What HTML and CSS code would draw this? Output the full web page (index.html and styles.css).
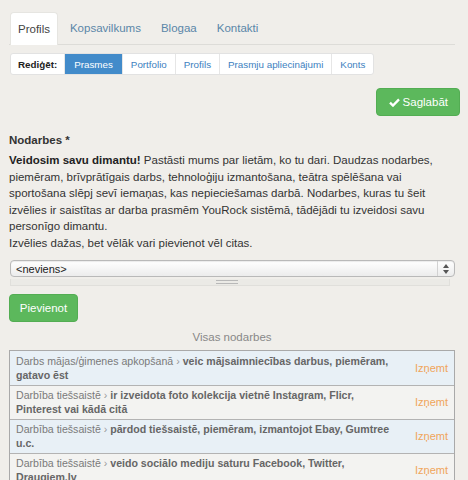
FILE: index.html
```html
<!DOCTYPE html>
<html lang="lv">
<head>
    <meta charset="UTF-8">
    <meta name="viewport" content="width=device-width, initial-scale=1.0">
    <title>Profils</title>
    <link rel="stylesheet" href="styles.css">
</head>
<body>

    <div class="page">
        <ul class="tabs">
            <li class="active"><a href="#">Profils</a></li>
            <li><a href="#">Kopsavilkums</a></li>
            <li><a href="#">Blogaa</a></li>
            <li><a href="#">Kontakti</a></li>
        </ul>

        <div class="subnav">
            <span class="subnav-label">Rediģēt:</span>
            <a href="#" class="current">Prasmes</a>
            <a href="#">Portfolio</a>
            <a href="#">Profils</a>
            <a href="#">Prasmju apliecinājumi</a>
            <a href="#">Konts</a>
        </div>

        <div class="actions">
            <button class="btn">
                <svg class="check" viewBox="0 0 12 10" width="11" height="9">
                    <path d="M1 5.2 L4.3 8.4 L11 1.6" fill="none" stroke="#fff" stroke-width="2.6"/>
                </svg>
                Saglabāt
            </button>
        </div>

        <h3 class="field-title">Nodarbes *</h3>
        <p class="intro">
            <b>Veidosim savu dimantu!</b> Pastāsti mums par lietām, ko tu dari. Daudzas nodarbes,
            piemēram, brīvprātīgais darbs, tehnoloģiju izmantošana, teātra spēlēšana vai
            sportošana slēpj sevī iemaņas, kas nepieciešamas darbā. Nodarbes, kuras tu šeit
            izvēlies ir saistītas ar darba prasmēm YouRock sistēmā, tādējādi tu izveidosi savu
            personīgo dimantu.<br>
            Izvēlies dažas, bet vēlāk vari pievienot vēl citas.
        </p>

        <div class="select">
            <span>&lt;neviens&gt;</span>
            <span class="select-arrows">
                <svg viewBox="0 0 6 10" width="6" height="10">
                    <path d="M0 4 L3 0 L6 4 Z M0 6 L3 10 L6 6 Z" fill="#555"/>
                </svg>
            </span>
        </div>
        <div class="resizer"><span class="grip"></span></div>

        <button class="btn add">Pievienot</button>

        <div class="list-title">Visas nodarbes</div>
        <div class="list">
            <div class="row">
                <div class="row-text"><span class="cat">Darbs mājas/ģimenes apkopšanā</span> <span class="sep">›</span> <b>veic mājsaimniecības darbus, piemēram, gatavo ēst</b></div>
                <a href="#" class="remove">Izņemt</a>
            </div>
            <div class="row">
                <div class="row-text"><span class="cat">Darbība tiešsaistē</span> <span class="sep">›</span> <b>ir izveidota foto kolekcija vietnē Instagram, Flicr, Pinterest vai kādā citā</b></div>
                <a href="#" class="remove">Izņemt</a>
            </div>
            <div class="row">
                <div class="row-text"><span class="cat">Darbība tiešsaistē</span> <span class="sep">›</span> <b>pārdod tiešsaistē, piemēram, izmantojot Ebay, Gumtree u.c.</b></div>
                <a href="#" class="remove">Izņemt</a>
            </div>
            <div class="row">
                <div class="row-text"><span class="cat">Darbība tiešsaistē</span> <span class="sep">›</span> <b>veido sociālo mediju saturu Facebook, Twitter, Draugiem.lv</b></div>
                <a href="#" class="remove">Izņemt</a>
            </div>
        </div>
    </div>

</body>
</html>
```

FILE: styles.css
```css
body {
    margin: 0;
    background-color: #f0eeea;
    font-family: "Liberation Sans", Arial, sans-serif;
    font-size: 11.5px;
    color: #333;
}

.page {
    padding: 12px 13px 0 9px;
}

.tabs {
    list-style: none;
    margin: 0;
    padding: 0 0 0 1px;
    display: flex;
    border-bottom: 1px solid #dddcd8;
}

.tabs li {
    margin-right: 4px;
}

.tabs a {
    display: block;
    padding: 0 7px;
    line-height: 31px;
    border: 1px solid transparent;
    border-bottom: none;
    border-radius: 4px 4px 0 0;
    color: #5a86a8;
    text-decoration: none;
    font-size: 11.5px;
}

.tabs .active a {
    background-color: #fff;
    border-color: #e6e5e1;
    color: #444;
    margin-bottom: -1px;
    line-height: 32px;
}

.subnav {
    display: inline-flex;
    margin: 8px 0 0 1px;
    background-color: #fff;
    border: 1px solid #e2e2e2;
    border-radius: 3px;
    font-size: 9.8px;
    height: 20px;
}

.subnav-label,
.subnav a {
    display: flex;
    align-items: center;
    padding: 0 8px;
    border-left: 1px solid #e6e6e6;
    color: #3d7fc0;
    text-decoration: none;
}

.subnav-label {
    border-left: none;
    color: #222;
    font-weight: bold;
    padding: 0 7px;
}

.subnav a.current {
    background-color: #428bca;
    color: #fff;
    padding: 0 9px;
}

.actions {
    display: flex;
    justify-content: flex-end;
    margin: 13px -5px 0 0;
}

.btn {
    font-family: "Liberation Sans", Arial, sans-serif;
    font-size: 11.5px;
    color: #fff;
    background-color: #5cb85c;
    border: 1px solid #53ad53;
    border-radius: 4px;
    height: 28px;
    padding: 0 11px 0 12px;
    cursor: pointer;
    display: inline-flex;
    align-items: center;
}

.check {
    margin-right: 3px;
}

.field-title {
    margin: 15px 0 0 0;
    font-size: 11.5px;
    line-height: 19px;
    color: #333;
}

.intro {
    margin: 2px 0 0 0;
    line-height: 16.5px;
    color: #333;
}

.intro b {
    color: #222;
}

.select {
    margin: 9px 0 0 1px;
    height: 15px;
    border: 1px solid #b9b9b9;
    border-radius: 4px;
    background: linear-gradient(#ffffff, #ececec);
    box-shadow: inset 0 1px 1px rgba(0, 0, 0, 0.08);
    display: flex;
    align-items: center;
    justify-content: space-between;
    font-size: 11px;
    color: #222;
    padding-left: 5px;
}

.select-arrows {
    width: 16px;
    height: 100%;
    border-left: 1px solid #d2d2d2;
    display: flex;
    align-items: center;
    justify-content: center;
}

.resizer {
    margin: 2px 5px 0 1px;
    height: 6px;
    border: 1px solid #e0dfdb;
    border-top: none;
    background-color: #ebeae6;
    display: flex;
    justify-content: center;
    align-items: center;
}

.grip {
    width: 22px;
    height: 2px;
    border-top: 1px solid #b8b8b8;
    border-bottom: 1px solid #b8b8b8;
    margin-left: -6px;
}

.btn.add {
    margin-top: 8px;
    padding: 0 11px;
    width: 69px;
    justify-content: center;
}

.list-title {
    text-align: center;
    color: #888;
    margin-top: 8px;
    line-height: 14px;
}

.list {
    margin-top: 6px;
    border: 1px solid #a9a9a9;
}

.row {
    display: flex;
    align-items: center;
    padding: 3px 6px 3px 6px;
    border-top: 1px solid #b3b3b3;
    font-size: 10.6px;
    line-height: 13.5px;
}

.row:first-child {
    border-top: none;
    padding-top: 4px;
}

.row:nth-child(odd) {
    background-color: #e8f0f6;
}

.row:nth-child(even) {
    background-color: #f3f3f1;
}

.row-text {
    flex: 1;
    padding-right: 20px;
    color: #7a7a7a;
}

.row-text b {
    color: #666;
}

.sep {
    color: #999;
}

.remove {
    color: #f0a55a;
    text-decoration: none;
    font-size: 11px;
}
```
